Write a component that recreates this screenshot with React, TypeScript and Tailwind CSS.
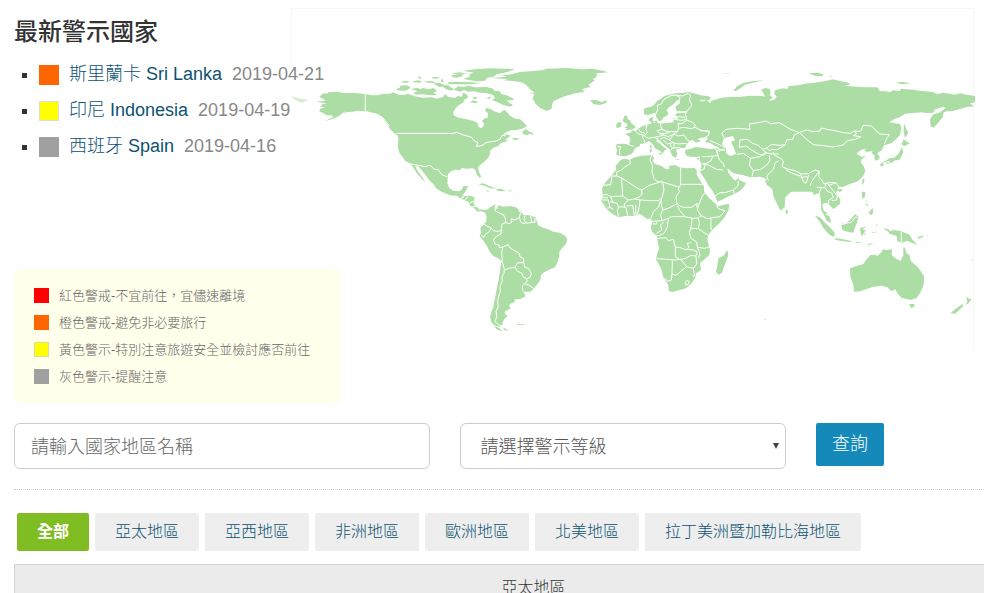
import { useState } from 'react'
import type { FormEvent } from 'react'
import clsx from 'clsx'

type AlertType = {
  country: string
  englishName: string
  date: string
  color: string
}

const latestAlerts: AlertType[] = [
  { country: '斯里蘭卡', englishName: 'Sri Lanka', date: '2019-04-21', color: 'bg-[#ff6600]' },
  { country: '印尼', englishName: 'Indonesia', date: '2019-04-19', color: 'bg-[#ffff00] border border-[#dddddd]' },
  { country: '西班牙', englishName: 'Spain', date: '2019-04-16', color: 'bg-[#a0a0a0]' },
]

const alertLevels = [
  { text: '紅色警戒-不宜前往，宜儘速離境', color: 'bg-[#ff0000]' },
  { text: '橙色警戒-避免非必要旅行', color: 'bg-[#ff6600]' },
  { text: '黃色警示-特別注意旅遊安全並檢討應否前往', color: 'bg-[#ffff00] border border-[#dddd99]' },
  { text: '灰色警示-提醒注意', color: 'bg-[#a0a0a0]' },
]

const regions = ['全部', '亞太地區', '亞西地區', '非洲地區', '歐洲地區', '北美地區', '拉丁美洲暨加勒比海地區']

type ContinentType = {
  name: string
  transform: string
  land: string
  borders: string
}

// each continent is drawn on its own grid, three units to a map unit
const continents: ContinentType[] = [
  {
    name: 'north-america',
    transform: 'translate(290 50) scale(.33333)',
    land: `M78 155L108 152 88 140 100 130 110 131 118 126 145 125 160 129 190 129 226 132 245 136 262 136 280 131 300 131 310 127 325 134 345 135 352 131 375 139 400 143 425 142 440 146 460 140 465 132 475 141 495 143 505 137 515 141 520 128 530 133 535 142 522 150 520 158 505 166 495 178 490 185 491 196 505 203 530 208 552 213 563 220 565 230 574 235 580 229 582 222 576 212 584 205 593 203 594 190 586 184 588 174 600 176 612 184 630 190 637 183 645 180 652 188 660 197 676 206 690 208 702 218 711 228 700 235 680 240 662 241 648 247 640 255 650 258 655 263 645 270 655 272 640 277 630 281 625 288 610 293 600 303 600 312 596 322 583 335 570 345 564 352 567 366 574 380 569 384 560 373 556 359 548 355 530 356 516 354 509 361 497 359 483 364 474 373 473 388 472 400 478 414 490 422 508 424 516 418 520 409 535 407 530 418 524 428 519 434 524 439 535 437 553 440 553 452 551 462 560 471 570 478 582 479 592 484 586 488 572 483 562 485 552 474 541 467 536 456 522 449 510 446 502 438 480 436 455 425 438 415 431 403 420 394 407 376 395 360 383 348 376 350 385 366 398 383 406 397 396 388 382 371 368 350 360 340 345 332 338 322 328 308 324 293 325 262 315 245 300 238 294 226 285 215 278 203 262 193 240 188 226 184 200 182 189 185 170 186 162 192 166 184 155 191 147 198 130 206 104 214 130 201 125 196 110 196 98 188 88 184 90 177 105 171 92 171 97 163 110 160Z
M318 118L332 112 328 107 350 106 362 112 352 121 338 122 322 121Z
M363 117L382 113 392 118 398 114 415 118 431 114 441 122 430 128 442 135 420 136 398 133 378 134 371 128 383 124Z
M330 96L350 92 360 96 345 99ZM365 96L382 91 397 94 390 98ZM402 94L428 94 440 98 415 99ZM380 78L396 83 390 87ZM424 83L440 80 451 84 430 86ZM455 85L462 95 452 95ZM430 101L448 98 465 106 450 112ZM475 97L495 95 545 97 570 99 545 103 500 103 474 102ZM456 108L475 105 480 110 492 117 482 122 467 117Z
M483 70L510 67 530 71 512 74ZM485 76L510 72 520 78 500 83 486 81ZM518 62L555 58 600 55 640 56 675 57 650 67 620 73 612 80 592 83 585 92 560 94 535 90 520 86 540 80 538 73 552 68Z
M490 119L505 109 520 111 535 107 555 112 590 111 610 116 612 122 630 124 635 133 650 136 668 144 672 149 650 152 660 160 669 165 660 170 640 165 620 155 606 150 615 144 610 135 588 129 570 128 552 124 535 125 522 120 510 125Z
M540 157L550 151 565 155 556 160ZM546 145L556 140 564 144 554 148ZM588 143L602 140 600 147ZM645 185L656 190 650 193Z
M697 245L707 238 705 235 719 246 729 249 728 255 719 251 711 256 698 252ZM665 266L678 263 690 266 674 271ZM645 253L660 256 658 262 650 261Z
M605 84L650 80 635 76 665 73 690 66 720 64 760 60 770 56 830 54 880 58 905 56 950 64 940 66 958 67 920 70 920 80 908 88 915 91 895 104 903 110 875 118 885 126 855 130 820 140 790 154 786 165 785 176 770 183 750 174 735 160 728 145 733 132 715 128 734 128 720 118 708 104 692 96 660 92 640 91 655 88Z
M900 151L918 150 935 156 950 150 950 158 930 165 910 162Z
M565 403L580 400 600 409 620 416 600 415 585 408ZM619 417L635 417 648 423 635 424 622 422ZM590 421l10 3-8 1zM655 421l12 1-8 3zM300 238l18 8 12 13-14-8zM120 180l8 7-10 2z`,
    borders: 'M226 132V184L240 188 262 193 278 203 298 228M320 250H490L500 247 520 255 545 262 552 272 564 278 559 290 577 286 587 279 600 275 615 274 630 268 637 255 645 258M360 342L385 346 405 350 420 346 433 358 445 359 455 374 472 380M510 446L520 442 519 434M524 450L535 440M540 458L553 453M548 469L560 470M567 480L570 475',
  },
  {
    name: 'south-america',
    transform: 'translate(440 180) scale(.33333)',
    land: `M128 93L143 88 152 80 168 73 164 82 172 88 174 76 190 80 210 78 228 82 235 88 246 98 250 105 270 106 286 112 292 125 294 136 303 140 312 144 325 148 342 156 360 158 375 167 382 178 377 193 366 205 358 215 357 230 353 245 345 262 325 270 310 278 303 286 301 300 290 316 280 327 272 335 255 335 248 332 254 342 255 350 240 357 225 358 223 367 209 372 208 380 213 384 204 390 195 394 194 402 203 408 192 418 188 428 186 437 177 440 166 437 155 428 150 412 154 395 160 382 162 368 166 350 170 328 176 300 180 270 184 245 178 237 160 228 149 215 141 198 130 182 119 168 123 158 121 145 127 136 138 126 140 110 136 98Z
M160 438L176 443 190 454 172 449ZM188 442L208 452 191 450ZM230 432L245 432 235 436ZM241 433L256 432 248 436Z`,
    borders: 'M168 75L165 92 173 97 190 104 196 115 197 128 186 132 184 145 185 152 M125 138L132 132 142 139 154 144 148 155 136 163 132 172 124 166M150 141L160 152 173 154 183 152M185 150L183 162 168 170 160 180 165 192 177 195 178 203 188 201 185 220 187 238 184 245M188 201L205 194 210 204 225 213 237 219 241 232 250 234 251 247 232 249 225 262 204 265 198 270 193 268 185 240M251 247L254 262 265 265 274 280 270 292 260 296 249 290 246 280 232 273 225 262M270 292L273 284M260 297L262 303 247 318 M256 312L266 315 280 325M247 318L248 332M193 268L192 280 186 290 187 303 180 320 181 335 176 348 173 365 175 380 168 394 170 410 165 425 175 434 187 438M197 128L208 131 216 126 214 116 225 120 238 112 242 125 247 130 275 128 290 125M235 90L242 98 238 112M256 106L252 116 257 129M272 106L275 128M286 113L283 126M189 438V452',
  },
  {
    name: 'europe',
    transform: 'translate(590 80) scale(.33333)',
    land: `M162 103L161 88 165 84 182 80 192 75 202 62 215 55 225 47 245 43 260 39 282 38 296 36 320 42 332 46 355 49 363 54 358 60 340 59 327 61 342 67 335 72 352 74 353 68 365 69 362 63 375 60 388 64 384 57 395 61 420 55 440 52 480 48V205H395L375 198 360 189 344 186 353 178 350 171 333 173 322 178 334 182 318 188 308 180 298 184 290 193 286 203 270 205 258 209 262 222 257 233 247 228 243 218 238 207 228 199 216 189 208 181 201 176 199 184 210 191 222 202 231 208 224 211 218 221 212 214 195 205 188 192 176 183 165 190 150 192 149 198 136 204 131 213 125 222 107 229 90 228 79 224 81 210 78 200 80 192 95 191 117 192 121 181 119 170 105 162 124 157 126 151 137 153 147 145 158 138 172 134 186 130 176 121 180 114 191 110 188 120 193 129 202 127 207 131 235 128 251 127 250 115 262 117 265 110 255 105 260 100 290 98 292 92 275 94 259 93 256 80 270 70 268 60 260 62 252 71 235 83 230 91 235 100 230 108 221 112 216 121 207 124 199 111 196 98 183 102 173 106Z
M98 122L103 107 113 108 112 116 121 122 124 130 130 134 137 140 130 148 105 151 112 145 103 143 112 137 109 128 103 128ZM78 142L80 130 90 126 95 130 92 140 85 144ZM203 220L215 219 213 225ZM180 196h5v8h-5zM179 207h6v10h-5zM255 238h13l-3 3zM318 236l14-3-6 6zM193 122h8v5h-8z`,
    borders: 'M198 103L203 88 202 76 214 72 222 58 240 48 255 45 270 52 268 62M258 45L278 48 294 40 302 46 298 60 306 75 292 92M82 200L92 200 88 212 90 227M110 192L131 199M136 153L145 162 160 165 158 173 165 185 163 190M146 148L152 156 165 160M170 135L168 148 172 158 163 168 175 175 190 172 205 176M211 131L215 148 202 152 207 160 220 165 205 170 196 170M215 148L228 153 240 155 262 155 266 145 264 128M207 160L225 160 240 158M220 165L235 170 255 160 262 155M266 145L280 142 304 146 315 142 315 135 304 125 290 121 277 130 264 132M315 142L330 150 357 154 355 166 346 172M251 118L275 121 290 118M265 110L285 112M285 98L290 118M250 162L265 168 282 165 292 180 298 182M250 165L238 180 250 188 265 192 290 190M210 178L222 172 238 180M220 180L232 192 240 190 250 188M240 192L247 205 241 212M247 205L268 202 273 205M252 190V203',
  },
  {
    name: 'middle-east',
    transform: 'translate(590 150) scale(.33333)',
    land: 'M284 8L287-1 300-3 318-9 340-6 360-3 390-5 420-8 430 40 412 56 415 68 427 84 436 92 445 83 448 90 468 99 462 110 450 122 433 132 412 141 396 149 382 155 377 142 366 120 356 108 345 88 330 66 334 50 333 30 336 18 318 21 300 20 290 17Z',
    borders: 'M336 20L350 20 372 18 384 17 380 2 375-4M384 17L380 2 395-2M335 42L348 40 362 34 368 20M384 17L388 30 400 40 403 52M340 43L355 45 380 58 400 60M330 62L342 58 345 46M375 138L390 128 405 128 430 120 433 132M430 120L444 108 445 92M405-8L395 2',
  },
  {
    name: 'africa',
    transform: 'translate(590 150) scale(.33333)',
    land: `M92 30L103 26 118 29 135 22 155 17 185 15 192 22 188 35 197 43 213 47 228 58 237 57 238 47 255 45 268 52 290 55 315 54 321 64 320 74 330 90 342 110 342 124 350 132 362 148 378 163 382 170 400 164 418 161 416 178 405 200 388 220 370 236 356 253 352 268 356 285 360 300 358 315 345 326 330 340 333 360 318 370 317 382 305 400 288 415 270 420 248 426 236 423 235 405 220 382 213 355 198 328 202 310 207 295 202 270 200 258 186 245 182 230 188 215 180 205 173 208 162 200 150 192 130 198 110 197 85 202 65 190 50 178 42 165 34 152 38 138 36 115 45 98 55 88 70 70 78 60 77 48Z
M412 300L415 315 406 340 396 368 386 374 378 366 382 345 385 325 400 318Z`,
    borders: 'M118 27L122 40 103 52 95 60 80 66 80 78 66 78 62 104 38 106M80 78L95 84 98 138 62 140 50 133 38 136M95 84L148 118 155 120 178 106 210 96M185 15L180 30 188 48 186 65 192 85 200 94 218 96M272 52V103H342M272 103L268 112 218 96 222 120 215 145 205 152 180 152 152 150 133 147 150 140 156 132 155 120M265 112L268 125 258 140 260 158 266 166 280 172 305 172 322 160 320 172M260 162L235 175 218 180 M215 145L213 160 218 180 212 195 216 212 M150 150L148 170 142 194M212 152L205 172 190 185 183 205M216 212L187 214M216 212L235 205 245 200 285 200 270 182 262 168M285 200L308 205 325 204 333 197 322 180 326 165 336 140 345 128M345 128L362 148M333 197L352 206 375 202 390 200 405 182 385 176 380 168M363 206V240M325 204L328 220 325 236 355 256M325 236L302 235 306 215 306 205M302 235L298 248 303 265 320 276 322 292 345 295 360 290M235 205L232 232 222 250 210 256 198 258M202 265L228 263 235 272 250 268 256 292 268 292 290 300 296 292 292 280 303 278M256 292V320L268 328 285 326 303 316 318 318 322 306 310 300 292 298M322 292L328 305 330 318 324 322M200 326L230 328 255 330 272 328 290 350 275 362 258 376 246 372 247 332M246 372L244 390 232 394 225 384M290 350L310 355 320 342 318 318M310 355L314 378M285 398l6-7 7 4-4 9-7 1zM308 378l8 0M85 200L82 180 88 170 108 172 113 196M110 168L128 166 133 196M137 165L138 194M103 162L115 150 133 147M98 138L115 150M36 150H55L60 172 70 178M36 143H54M50 175L62 172M60 155L82 160 85 172M62 140L70 158M103 162V170M188 222H200L200 215M200 250L215 240 212 225 222 215',
  },
  {
    name: 'asia',
    transform: 'translate(700 70) scale(.33333)',
    land: `M0 96L12 94 20 89 30 99 42 90 65 83 100 80 120 82 150 77 185 78 195 80 190 68 183 60 195 54 208 56 212 64 210 75 218 83 206 92 222 90 230 80 222 70 226 60 250 55 262 57 265 49 300 45 315 41 345 38 380 32 398 28 420 33 445 38 450 44 432 47 470 50 500 52 532 52 540 64 550 63 570 66 580 61 600 63 602 56 640 59 665 63 700 66 712 72 730 68 765 74 780 70 800 74 825 78 825 97 810 100 822 109 800 111 780 117 755 124 740 124 730 128 728 142 715 158 700 173 692 168 690 148 700 133 718 128 737 114 732 110 705 118 700 128 685 130 665 127 640 129 615 131 600 141 582 148 568 157 600 162 604 175 600 195 588 208 574 220 552 226 546 240 532 250 540 262 534 270 524 272 523 256 515 250 517 243 500 246 492 240 500 234 484 240 474 246 470 252 485 260 498 258 485 268 482 275 492 290 496 303 490 318 474 334 450 342 430 350 415 352 410 365H225L212 353 198 343 206 335 195 325 180 320 150 322 130 316 108 311 98 308 82 295 75 288 60 280 0 275V240H50L60 228 30 215 20 198 0 185Z
M612 160L618 175 625 188 615 204 611 185ZM605 222L611 208 622 216 630 220 612 229ZM605 232L610 246 604 260 598 269 582 272 575 280 565 273 545 279 570 264 582 264 597 250ZM540 282L550 278 550 287 543 290ZM555 278L570 276 564 282ZM100 62L112 48 132 38 160 33 192 31 165 37 135 44 122 54 108 63ZM326 10L350 8 370 13 366 19 345 17ZM388 17l8 1-4 3zM587 37L610 36 632 40 604 43ZM410 360l10-4 9 4-9 6zM490 330l4 0-5 15-3-5z`,
    borders: 'M0 182L28 184 25 198M65 190L78 178 110 175 150 178 148 162 175 158 198 153 212 161 238 158 258 170 272 178 298 188 283 195 278 208 260 210 256 224 238 226 215 223 200 234 188 238 175 226 158 220 142 208 120 210 118 232M66 190L72 202M298 188L318 180 340 185 360 183 364 174 380 178 400 181 430 188 452 190 462 183 470 190 460 197 482 200 466 208 442 212 430 225 398 231 372 227 340 224 320 208 298 188M462 183L482 184 490 166 515 168 528 182 540 192 568 194 560 206 553 222M118 232L138 228 155 240 175 252 192 256 200 248 188 240M110 253L130 250 152 265 148 285 160 302 156 320M152 265L180 260 195 248 215 252 236 252M160 302L182 298 200 285 210 272 208 256M200 234L208 242 218 238 230 240 256 224M218 246L224 256 244 266 250 275 246 290 262 297 285 302 305 312 325 311 345 300 358 304M236 272L225 280 220 298 200 318 205 332M255 292L262 303 288 314 300 318M302 312L310 335 318 340 326 315M302 322L322 320M358 304L356 320 365 330 372 342 385 338 408 338 418 352M358 304L345 320 335 335 330 348M30 212L50 220 75 232M50 230L62 240 76 240M50 238L60 245',
  },
  {
    name: 'southeast-asia-oceania',
    transform: 'translate(740 160) scale(.33333)',
    land: `M75 62L80 72 92 78 98 92 100 108 110 130 122 152 134 142 136 112 150 98 168 85 180 72 195 66 205 72 210 85 222 105 236 100 242 120 244 140 243 150 252 165 260 182 272 190 272 178 264 162 250 150 247 132 260 128 268 135 280 147 300 132 300 118 288 98 284 84 292 75 300 60H80Z
M137 147L144 153 143 163 137 160ZM225 167L240 172 255 188 270 202 284 218 283 232 268 224 250 204 240 186ZM284 234L305 237 335 243 332 246 300 242 286 239ZM303 191L318 190 330 180 346 162 356 172 350 190 344 205 340 218 322 215 307 210ZM360 204L380 200 368 208 378 212 372 216 380 228 370 220 366 230 362 220ZM367 95L376 96 375 110 368 117 365 106ZM374 118l10 8-6-2zM378 130l8 6-4 3zM385 158L398 144 400 158 393 166ZM372 138l8-10-4 8zM366 66l2-8 5-4-2 10zM408 190l4 6-2 4zM395 215l15 2-12 1zM345 246l25 1-20 3zM382 252l20-3-15 7z
M428 205L445 207 450 214 462 210 485 214 508 224 518 240 533 255 512 247 500 242 488 248 472 244 470 228 450 222 442 212ZM532 232l14-4 4-6-2 10-12 4z
M330 325L350 318 370 312 378 300 392 285 405 284 412 288 426 275 428 268 438 270 456 268 455 285 468 296 482 302 490 285 490 262 495 263 499 280 508 285 513 304 530 318 540 330 553 350 550 378 540 400 530 414 512 420 484 413 472 400 466 388 455 394 442 382 425 377 400 380 378 388 362 394 342 395 340 375 331 350Z
M507 432L524 432 521 442 513 444ZM678 408L684 415 694 418 686 430 678 434 682 424ZM668 432L670 438 658 450 645 461 631 460 645 448Z`,
    borders: 'M484 214V248M303 194L320 190 335 186 345 172 352 172M258 163L268 166M240 120L238 95 246 82 258 85 262 95 275 98 280 112 265 122 266 132M255 80L258 70 270 75 288 68M265 75L282 95 292 108 290 120 275 122M230 82L246 82',
  },
]

// small island chains, paler than the mainland
const islands =
  'M292 96L297 98 303 99 309 100 305 101 302 103 297 101 293 98ZM723 73h8l-5 1zM945 255l5 3-2-1zM949 255l2 2zM971 259l3 1-2 1zM925 234l5 3-3-1zM935 239l5 4zM763 319h4l-2 1zM963 293l2 2z'

const caspianSea = 'M724 138L733 136 735 140 731 142 734 148 736 154 730 156 726 153 726 148 722 144Z'

const WorldMap = () => (
  <svg viewBox="291 8 693 395" className="block w-full" role="img" aria-label="世界地圖">
    <path d="M291.500 68V8.500H973.500V350" fill="none" stroke="#f7f7f7" />
    {continents.map((item) => (
      <path key={item.name} d={item.land} transform={item.transform} fill="#acdda4" />
    ))}
    {continents.map((item) => (
      <path
        key={item.name}
        d={item.borders}
        transform={item.transform}
        fill="none"
        stroke="#ffffff"
        strokeWidth="3"
        strokeLinejoin="round"
      />
    ))}
    <path d={caspianSea} fill="#ffffff" />
    <path d={islands} fill="#d5eed1" />
  </svg>
)

const LatestAlerts = () => (
  <div>
    <h2 className="text-2xl leading-8 font-medium text-[#333333]">最新警示國家</h2>
    <ul className="mt-2 pl-2">
      {latestAlerts.map((item) => (
        <li key={item.englishName} className="flex h-9 items-center text-lg">
          <span className="mt-0.5 mr-3 size-[5px] bg-[#333333]" />
          <span className={clsx('mt-0.5 mr-2.5 size-5', item.color)} />
          <a href="#" className="font-light text-[#0d5272]">
            {item.country} {item.englishName}
          </a>
          <span className="ml-2.5 text-[#888888]">{item.date}</span>
        </li>
      ))}
    </ul>
  </div>
)

const Legend = () => (
  <ul className="w-[326px] rounded bg-[#ffffeb] px-5 py-[13px]">
    {alertLevels.map((item) => (
      <li key={item.text} className="flex h-[27px] items-center text-[13px] font-light text-[#666666]">
        <span className={clsx('mr-2.5 size-[15px]', item.color)} />
        {item.text}
      </li>
    ))}
  </ul>
)

const SearchForm = () => {
  const onSubmit = (e: FormEvent) => e.preventDefault()

  return (
    <form onSubmit={onSubmit} className="mt-5 flex items-start gap-[30px] pr-[100px] text-lg font-light">
      <div className="min-w-0 flex-[14]">
        <input
          type="text"
          aria-label="國家地區名稱"
          placeholder="請輸入國家地區名稱"
          className="h-[46px] w-full rounded-md border border-[#cccccc] px-4 pt-0.5 text-[#555555] placeholder:text-[#666666]"
        />
      </div>
      <div className="relative min-w-0 flex-[11]">
        <select
          aria-label="警示等級"
          className="h-[46px] w-full appearance-none rounded-md border border-[#cccccc] bg-white px-5 pt-0.5 text-[#555555]"
        >
          <option>請選擇警示等級</option>
          <option>紅色警戒</option>
          <option>橙色警戒</option>
          <option>黃色警示</option>
          <option>灰色警示</option>
        </select>
        <svg viewBox="0 0 6 6" className="pointer-events-none absolute top-5 right-[7px] size-1.5" aria-hidden="true">
          <path d="M0 0H6L3 6Z" fill="#444444" />
        </svg>
      </div>
      <button type="submit" className="h-[43px] w-[68px] rounded-xs bg-[#158aba] pb-0.5 text-white">
        查詢
      </button>
    </form>
  )
}

const App = () => {
  const [activeRegion, setActiveRegion] = useState('全部')

  return (
    <div className="overflow-hidden bg-white pl-3.5 font-['Liberation_Sans','Noto_Sans_CJK_TC',sans-serif]">
      {/* the list and the legend lie over the empty west side of the map */}
      <section className="grid">
        <div className="col-start-1 row-start-1 ml-[277px] pt-2">
          <WorldMap />
        </div>
        <div className="z-10 col-start-1 row-start-1 flex flex-col items-start justify-between pt-4">
          <LatestAlerts />
          <Legend />
        </div>
      </section>

      <SearchForm />

      <hr className="mt-5 border-t border-dotted border-[#cccccc]" />

      <div className="mt-[23px] ml-[3px] flex flex-wrap gap-1.5">
        {regions.map((region) => (
          <button
            key={region}
            type="button"
            onClick={() => setActiveRegion(region)}
            className={clsx(
              'h-[38px] rounded-xs px-5 text-base',
              region === activeRegion ? 'bg-[#80bd22] font-bold text-white' : 'bg-[#eeeeee] font-light text-[#0d5272]',
            )}
          >
            {region}
          </button>
        ))}
      </div>

      <div className="-mr-[69px] mt-[13px]">
        <table className="w-full border-collapse">
          <thead>
            <tr>
              <th className="h-[46px] border border-[#d4d4d4] bg-[#ebebeb] text-base font-light text-[#333333]">亞太地區</th>
            </tr>
          </thead>
        </table>
      </div>
    </div>
  )
}

export default App
